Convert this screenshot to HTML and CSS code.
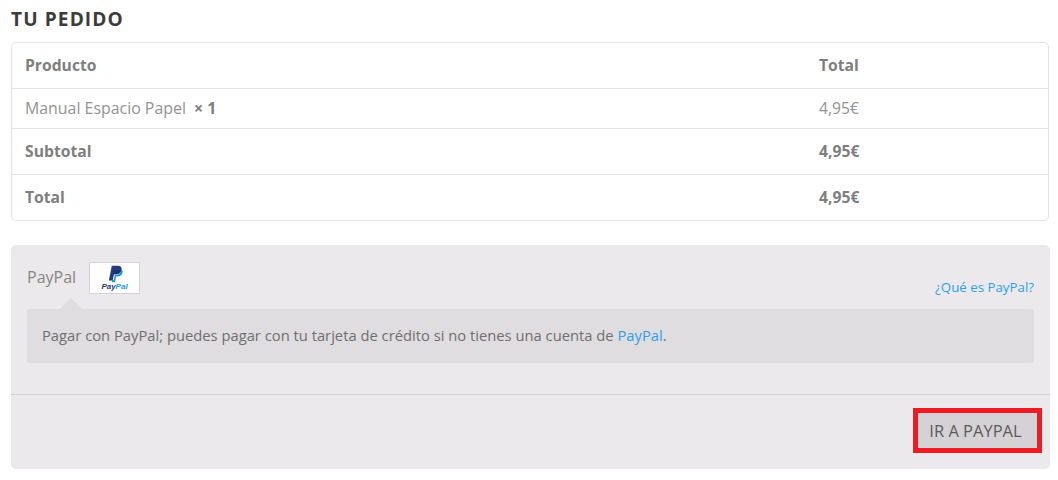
FILE: index.html
```html
<!DOCTYPE html>
<html lang="es">
<head>
<meta charset="utf-8">
<title>Tu pedido</title>
<link rel="stylesheet" href="styles.css">
</head>
<body>
<h3 class="title">TU PEDIDO</h3>
<table class="order">
  <thead>
    <tr class="tall"><th class="c1">Producto</th><th class="c2">Total</th></tr>
  </thead>
  <tbody>
    <tr class="item"><td class="c1">Manual Espacio Papel <strong class="qty">× 1</strong></td><td class="c2">4,95€</td></tr>
    <tr class="tall"><th class="c1">Subtotal</th><th class="c2">4,95€</th></tr>
    <tr class="tall"><th class="c1">Total</th><th class="c2">4,95€</th></tr>
  </tbody>
</table>
<section class="payment">
  <div class="method">
    <div class="method-head">
      <span class="method-name">PayPal</span>
      <span class="logo">
        <svg class="logo-p" viewBox="0 0 24 28" width="16" height="18" aria-hidden="true">
          <path fill="#253b80" d="M7 1h9c4 0 7 2 6.300 6.500C21.500 12 18 14.500 13.500 14.500H10L8.400 24H2.500z"/>
          <path fill="#179bd7" d="M21.800 6.500c1.800 1 2.500 3 2 5.300-.8 4-3.800 6.200-8 6.200h-2.300l-1.300 9H7l.6-3.500h2.500l1.500-8.500h3c4 0 6.800-3.300 7.200-8.500z"/>
          <path fill="#222d65" d="M9.500 7.500h7c1.800 0 3.500.3 5 1-1 3.700-4 6-8.500 6h-3L8.400 22z" opacity=".75"/>
        </svg>
        <span class="logo-text"><span class="pay">Pay</span><span class="pal">Pal</span></span>
      </span>
      <a class="what" href="#">¿Qué es PayPal?</a>
    </div>
    <div class="notice">Pagar con PayPal; puedes pagar con tu tarjeta de crédito si no tienes una cuenta de <a href="#">PayPal</a>.</div>
  </div>
  <div class="actions">
    <button class="pay-button" type="button">IR A PAYPAL</button>
  </div>
</section>
</body>
</html>
```
FILE: styles.css
```css
* { box-sizing: border-box; }
html, body { margin: 0; padding: 0; background: #fff; }
body {
  padding: 0 8px 0 11px;
  height: 480px;
  overflow: hidden;
  font-family: "Open Sans", sans-serif;
  font-size: 14.5px;
  color: #7f7f7f;
}
.title {
  margin: 0;
  height: 42px;
  padding-top: 7px;
  font-size: 19.100px;
  line-height: 24px;
  font-weight: 700;
  letter-spacing: 1.100px;
  color: #3c3c3c;
}
.order {
  width: 1038px;
  border: 1px solid #e4e4e4;
  border-radius: 5px;
  border-spacing: 0;
  border-collapse: separate;
}
.order th, .order td {
  padding: 0 13px 2px;
  text-align: left;
  border-top: 1px solid #e4e4e4;
  font-size: 15.700px;
}
.order thead th { border-top: 0; }
.order th { font-weight: 700; }
.order td { font-weight: 400; color: #939393; }
.order td.c1 { font-size: 15.900px; }
.order .c1 { width: 794px; }
.order .tall th { height: 46px; }
.order thead .tall th { height: 45px; }
.order .item td { height: 40px; }
.qty { margin-left: 4px; font-weight: 700; color: #7f7f7f; }
.payment {
  margin-top: 24px;
  width: 1039px;
  height: 224px;
  background: #ebe9eb;
  border-radius: 5px;
  display: flex;
  flex-direction: column;
}
.method {
  height: 150px;
  padding: 17px 16px 0;
  border-bottom: 1px solid #d2d0d2;
}
.method-head {
  height: 47px;
  display: flex;
  align-items: flex-start;
  position: relative;
}
.method-head::after {
  content: "";
  position: absolute;
  left: 33px;
  bottom: 0;
  border: 11px solid transparent;
  border-top: 0;
  border-bottom-color: #dfdddf;
}
.method-name {
  font-size: 16px;
  line-height: 31px;
  color: #858585;
  width: 62px;
}
.logo {
  width: 51px;
  height: 32px;
  background: #fff;
  border: 1px solid #d5d3d5;
  display: flex;
  flex-direction: column;
  align-items: center;
  padding-top: 2px;
}
.logo-text {
  font-family: "Liberation Sans", sans-serif;
  font-size: 8px;
  line-height: 8px;
  font-weight: 700;
  font-style: italic;
}
.pay { color: #253b80; }
.pal { color: #179bd7; }
.what {
  margin-left: auto;
  margin-top: 16px;
  font-size: 13.300px;
  line-height: 18px;
  color: #2f9fe8;
  text-decoration: none;
}
.notice {
  height: 54px;
  padding: 0 15px;
  line-height: 52px;
  white-space: nowrap;
  background: #dfdddf;
  border-radius: 3px;
  font-size: 14.750px;
  color: #6f6f6f;
}
.notice a { color: #2f9fe8; text-decoration: none; }
.actions {
  flex: 1;
  display: flex;
  justify-content: flex-end;
  align-items: flex-start;
  padding: 18px 13px 0 0;
}
.pay-button {
  width: 119px;
  height: 35px;
  border: 0;
  padding: 0 4px 0 0;
  outline: 5px solid #ed1c24;
  background: #d4d2d4;
  font-family: "Open Sans", sans-serif;
  font-size: 16.500px;
  color: #5c5c5c;
}
```
